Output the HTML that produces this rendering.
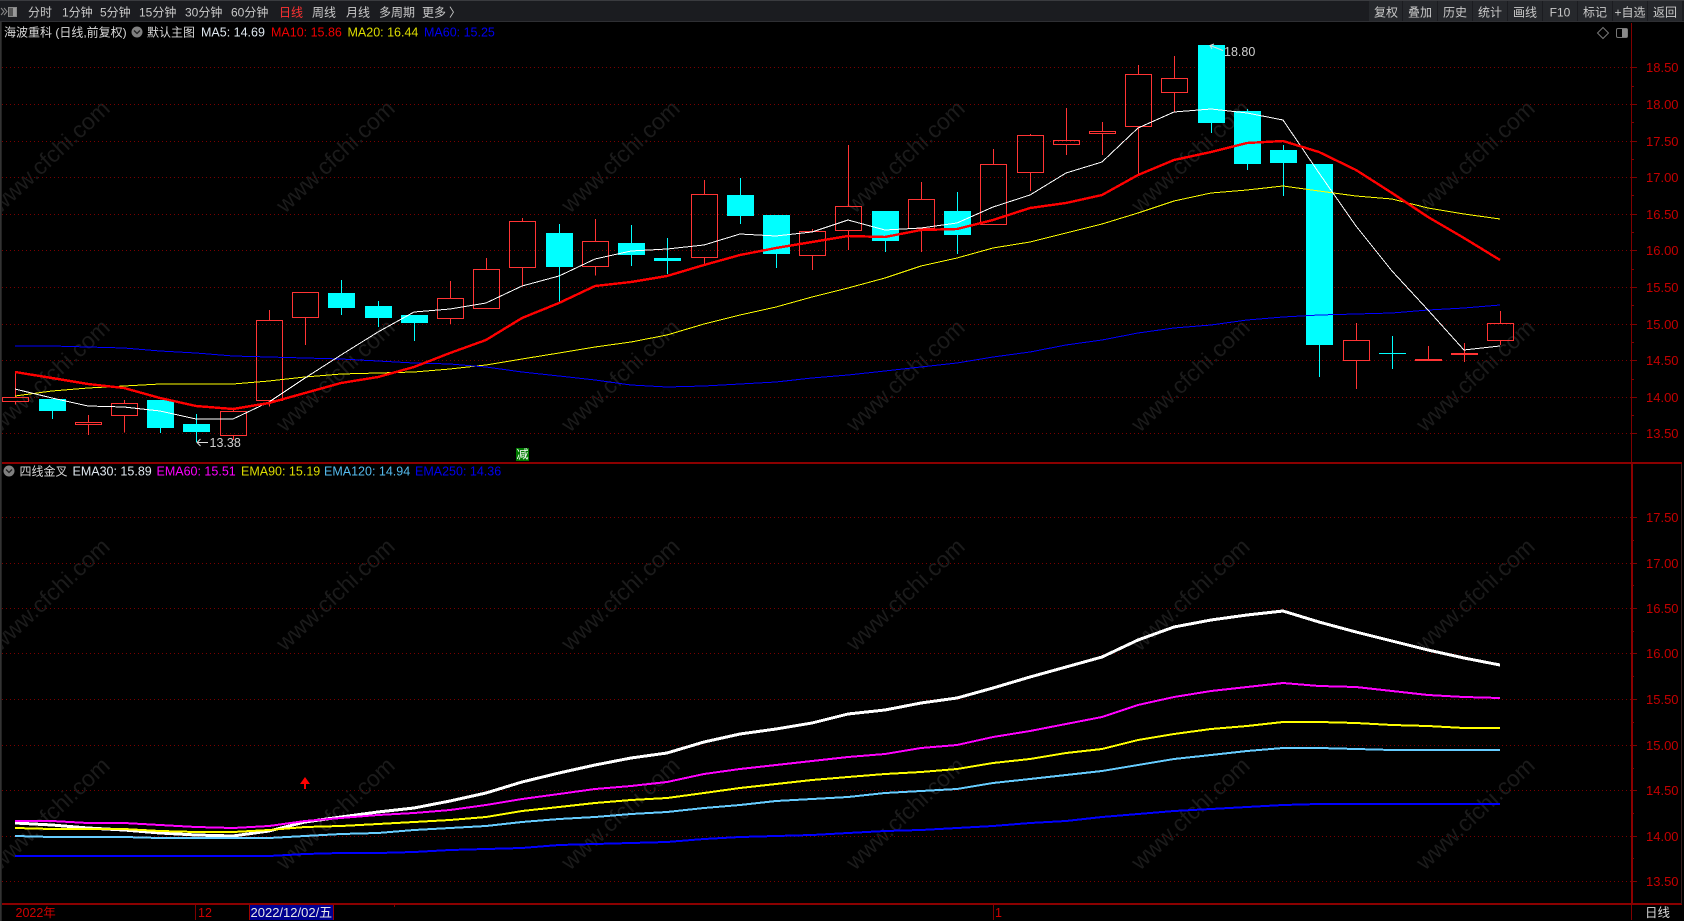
<!DOCTYPE html>
<html lang="zh"><head><meta charset="utf-8"><title>海波重科</title>
<style>
html,body{margin:0;padding:0;background:#000;width:1684px;height:921px;overflow:hidden}
svg{display:block;position:absolute;left:0;top:0}
text{font-family:"Liberation Sans","Noto Sans CJK SC",sans-serif;font-size:12.5px}
.tb text{fill:#c9c9c9;font-size:12px}
.btn text{fill:#c9c9c9;font-size:12px;text-anchor:middle}
.wm text{fill:#1b1b1b;font-size:23px}
.ax text{fill:#c40000;font-size:13px}
.grid path{stroke:#7a0000;stroke-width:1;stroke-dasharray:1 3;fill:none}
.ln{fill:none;shape-rendering:crispEdges;stroke-linejoin:round}
</style></head><body>
<svg width="1684" height="921" viewBox="0 0 1684 921" xmlns="http://www.w3.org/2000/svg">
<rect width="1684" height="921" fill="#000"/>

<!-- watermark -->
<g class="wm">
<text transform="translate(0,214) rotate(-43)">www.cfchi.com</text><text transform="translate(285,214) rotate(-43)">www.cfchi.com</text><text transform="translate(570,214) rotate(-43)">www.cfchi.com</text><text transform="translate(855,214) rotate(-43)">www.cfchi.com</text><text transform="translate(1140,214) rotate(-43)">www.cfchi.com</text><text transform="translate(1425,214) rotate(-43)">www.cfchi.com</text>
<text transform="translate(0,433) rotate(-43)">www.cfchi.com</text><text transform="translate(285,433) rotate(-43)">www.cfchi.com</text><text transform="translate(570,433) rotate(-43)">www.cfchi.com</text><text transform="translate(855,433) rotate(-43)">www.cfchi.com</text><text transform="translate(1140,433) rotate(-43)">www.cfchi.com</text><text transform="translate(1425,433) rotate(-43)">www.cfchi.com</text>
<text transform="translate(0,652) rotate(-43)">www.cfchi.com</text><text transform="translate(285,652) rotate(-43)">www.cfchi.com</text><text transform="translate(570,652) rotate(-43)">www.cfchi.com</text><text transform="translate(855,652) rotate(-43)">www.cfchi.com</text><text transform="translate(1140,652) rotate(-43)">www.cfchi.com</text><text transform="translate(1425,652) rotate(-43)">www.cfchi.com</text>
<text transform="translate(0,871) rotate(-43)">www.cfchi.com</text><text transform="translate(285,871) rotate(-43)">www.cfchi.com</text><text transform="translate(570,871) rotate(-43)">www.cfchi.com</text><text transform="translate(855,871) rotate(-43)">www.cfchi.com</text><text transform="translate(1140,871) rotate(-43)">www.cfchi.com</text><text transform="translate(1425,871) rotate(-43)">www.cfchi.com</text>
</g>

<!-- grid -->
<g class="grid" shape-rendering="crispEdges">
<path d="M2 67.5H1631M2 104.5H1631M2 141.5H1631M2 177.5H1631M2 214.5H1631M2 250.5H1631M2 287.5H1631M2 324.5H1631M2 360.5H1631M2 397.5H1631M2 433.5H1631"/>
<path d="M2 517.5H1631M2 563.5H1631M2 608.5H1631M2 653.5H1631M2 699.5H1631M2 745.5H1631M2 790.5H1631M2 836.5H1631M2 881.5H1631"/>
</g>

<!-- frame -->
<g shape-rendering="crispEdges">
<rect x="0" y="22" width="1" height="899" fill="#333"/>
<rect x="1" y="22" width="1" height="899" fill="#222"/>
<rect x="1631" y="23" width="1" height="440" fill="#800000"/>
<rect x="1631" y="462" width="2" height="442" fill="#8b0000"/>
<rect x="2" y="462" width="1680" height="2" fill="#8b0000"/>
<rect x="2" y="903" width="1680" height="2" fill="#8b0000"/>
<rect x="1681" y="464" width="1" height="440" fill="#3a2020"/>
<rect x="1631" y="905" width="1" height="15" fill="#800000"/>
<path fill="none" stroke="#800000" d="M1632 67.5h5M1632 104.5h5M1632 141.5h5M1632 177.5h5M1632 214.5h5M1632 250.5h5M1632 287.5h5M1632 324.5h5M1632 360.5h5M1632 397.5h5M1632 433.5h5M1632 517.5h5M1632 563.5h5M1632 608.5h5M1632 653.5h5M1632 699.5h5M1632 745.5h5M1632 790.5h5M1632 836.5h5M1632 881.5h5M1632 86.5h2M1632 122.5h2M1632 159.5h2M1632 195.5h2M1632 232.5h2M1632 269.5h2M1632 305.5h2M1632 342.5h2M1632 379.5h2M1632 415.5h2M1632 540.5h2M1632 585.5h2M1632 631.5h2M1632 676.5h2M1632 722.5h2M1632 768.5h2M1632 813.5h2M1632 858.5h2"/>
</g>

<!-- axis labels -->
<g class="ax">
<text x="1646" y="72">18.50</text><text x="1646" y="109">18.00</text><text x="1646" y="146">17.50</text><text x="1646" y="182">17.00</text><text x="1646" y="219">16.50</text><text x="1646" y="255">16.00</text><text x="1646" y="292">15.50</text><text x="1646" y="329">15.00</text><text x="1646" y="365">14.50</text><text x="1646" y="402">14.00</text><text x="1646" y="438">13.50</text>
<text x="1646" y="522">17.50</text><text x="1646" y="568">17.00</text><text x="1646" y="613">16.50</text><text x="1646" y="658">16.00</text><text x="1646" y="704">15.50</text><text x="1646" y="750">15.00</text><text x="1646" y="795">14.50</text><text x="1646" y="841">14.00</text><text x="1646" y="886">13.50</text>
</g>

<!-- red candles -->
<path shape-rendering="crispEdges" fill="none" stroke="#ff3434" stroke-width="1" d="
M15.5 372V397.5M2.5 397.5H28.5V401.5H2.5ZM15.5 401.5V404.5
M88.5 415V422.5M75.5 422.5H101.5V424.5H75.5ZM88.5 424.5V435
M124.5 400V403.5M111.5 403.5H137.5V415.5H111.5ZM124.5 415.5V432.5
M233.5 408V411.5M220.5 411.5H246.5V435.5H220.5ZM233.5 435.5V440
M269.5 310V320.5M256.5 320.5H282.5V400.5H256.5ZM269.5 400.5V406.5
M292.5 292.5H318.5V317.5H292.5ZM305.5 317.5V345
M450.5 281V298.5M437.5 298.5H463.5V318.5H437.5ZM450.5 318.5V324
M486.5 258V269.5M473.5 269.5H499.5V308.5H473.5Z
M522.5 218V221.5M509.5 221.5H535.5V267.5H509.5ZM522.5 267.5V285.5
M595.5 219V241.5M582.5 241.5H608.5V266.5H582.5ZM595.5 266.5V275.5
M704.5 180V194.5M691.5 194.5H717.5V257.5H691.5ZM704.5 257.5V265
M812.5 229V231.5M799.5 231.5H825.5V255.5H799.5ZM812.5 255.5V270
M848.5 145V206.5M835.5 206.5H861.5V230.5H835.5ZM848.5 230.5V250
M921.5 182V199.5M908.5 199.5H934.5V228.5H908.5ZM921.5 228.5V252
M993.5 149V164.5M980.5 164.5H1006.5V224.5H980.5Z
M1030.5 134V135.5M1017.5 135.5H1043.5V172.5H1017.5ZM1030.5 172.5V191
M1066.5 108V140.5M1053.5 140.5H1079.5V144.5H1053.5ZM1066.5 144.5V155
M1102.5 122V131.5M1089.5 131.5H1115.5V133.5H1089.5ZM1102.5 133.5V155
M1138.5 65V74.5M1125.5 74.5H1151.5V126.5H1125.5ZM1138.5 126.5V175.5
M1174.5 56V78.5M1161.5 78.5H1187.5V92.5H1161.5ZM1174.5 92.5V111.5
M1356.5 323V340.5M1343.5 340.5H1369.5V360.5H1343.5ZM1356.5 360.5V389
M1428.5 346V359M1464.5 343V362
M1500.5 311V323.5M1487.5 323.5H1513.5V340.5H1487.5ZM1500.5 340.5V345"/>
<g shape-rendering="crispEdges" fill="#ff3434">
<rect x="1415" y="359" width="27" height="2"/>
<rect x="1451" y="353" width="27" height="2"/>
</g>

<!-- cyan candles -->
<g shape-rendering="crispEdges" fill="#0ff">
<path stroke="#0ff" fill="none" d="M52.5 411V419M160.5 428V433M196.5 414V442M341.5 280V315M378.5 301V327M414.5 323V341M559.5 224V302M631.5 225V266M667.5 238V274M740.5 178V224M776.5 254V268M885.5 241V252M957.5 192V254M1211.5 123V133M1247.5 109V170M1283.5 145V196M1319.5 345V377M1392.5 336V369"/>
<rect x="39" y="399" width="27" height="12"/>
<rect x="147" y="400" width="27" height="28"/>
<rect x="183" y="424" width="27" height="8"/>
<rect x="328" y="293" width="27" height="15"/>
<rect x="365" y="306" width="27" height="12"/>
<rect x="401" y="315" width="27" height="8"/>
<rect x="546" y="233" width="27" height="34"/>
<rect x="618" y="243" width="27" height="12"/>
<rect x="654" y="258" width="27" height="3"/>
<rect x="727" y="195" width="27" height="21"/>
<rect x="763" y="215" width="27" height="39"/>
<rect x="872" y="211" width="27" height="30"/>
<rect x="944" y="211" width="27" height="24"/>
<rect x="1198" y="45" width="27" height="78"/>
<rect x="1234" y="111" width="27" height="53"/>
<rect x="1270" y="150" width="27" height="13"/>
<rect x="1306" y="164" width="27" height="181"/>
<rect x="1379" y="353" width="27" height="1"/>
</g>

<!-- upper MA lines -->
<polyline class="ln" stroke="#ffff00" stroke-width="1" points="15,396 52,391 88,388 124,386 160,384 196,384 233,384 269,381 305,377 341,374 378,373 414,372 450,369 486,365 522,359 559,353 595,347 631,342 667,335 704,324 740,315 776,307 812,297 848,288 885,278 921,266 957,258 993,248 1030,242 1066,233 1102,224 1138,213 1174,201 1211,193 1247,190 1283,186 1319,191 1356,196 1392,199 1428,208 1464,214 1500,219"/>
<polyline class="ln" stroke="#0000ff" stroke-width="1" points="15,346 52,346 88,347 124,348 160,351 196,353 233,356 269,357 305,358 341,359 378,361 414,363 450,364 486,367 522,372 559,376 595,380 631,385 667,387 704,386 740,384 776,382 812,378 848,375 885,371 921,367 957,363 993,357 1030,352 1066,345 1102,340 1138,333 1174,328 1211,325 1247,320 1283,317 1319,315 1356,314 1392,313 1428,310 1464,308 1500,305"/>
<polyline class="ln" stroke="#ffffff" stroke-width="1" points="15,389 52,398 88,406 124,407 160,411 196,419 233,419 269,402 305,378 341,355 378,332 414,312 450,309 486,303 522,286 559,276 595,259 631,251 667,249 704,245 740,234 776,236 812,232 848,220 885,230 921,228 957,223 993,207 1030,195 1066,173 1102,162 1138,128 1174,112 1211,109 1247,113 1283,120 1319,173 1356,226 1392,271 1428,310 1464,350 1500,346"/>
<polyline class="ln" stroke="#ff0000" stroke-width="2.4" points="15,372 52,378 88,384 124,388 160,398 196,406 233,409 269,403 305,393 341,383 378,377 414,367 450,353 486,340 522,318 559,303 595,286 631,282 667,276 704,265 740,255 776,248 812,242 848,236 885,237 921,230 957,229 993,220 1030,208 1066,203 1102,195 1138,175 1174,160 1211,152 1247,143 1283,141 1319,152 1356,170 1392,193 1428,217 1464,238 1500,260"/>

<!-- lower EMA lines -->
<polyline class="ln" stroke="#ffffff" stroke-width="3" points="15,823 52,825 88,828 124,830 160,833 196,835 233,836 269,831 305,822 341,817 378,812 414,808 450,801 486,793 522,782 559,773 595,765 631,758 667,753 704,742 740,734 776,729 812,723 848,714 885,710 921,703 957,698 993,688 1030,677 1066,667 1102,657 1138,640 1174,627 1211,620 1247,615 1283,611 1319,622 1356,632 1392,641 1428,650 1464,658 1500,665"/>
<polyline class="ln" stroke="#ff00ff" stroke-width="2" points="15,821 52,821 88,823 124,823 160,825 196,827 233,828 269,826 305,821 341,818 378,815 414,813 450,810 486,805 522,799 559,794 595,789 631,786 667,782 704,774 740,769 776,765 812,761 848,757 885,754 921,748 957,745 993,737 1030,731 1066,724 1102,717 1138,705 1174,697 1211,691 1247,687 1283,683 1319,686 1356,687 1392,691 1428,695 1464,697 1500,698"/>
<polyline class="ln" stroke="#ffff00" stroke-width="2" points="15,828 52,829 88,829 124,829 160,831 196,832 233,832 269,830 305,827 341,826 378,824 414,822 450,820 486,817 522,811 559,807 595,803 631,800 667,798 704,793 740,788 776,784 812,780 848,777 885,774 921,772 957,769 993,763 1030,759 1066,753 1102,749 1138,740 1174,734 1211,729 1247,726 1283,722 1319,722 1356,723 1392,725 1428,726 1464,728 1500,728"/>
<polyline class="ln" stroke="#66ccff" stroke-width="2" points="15,836 52,837 88,837 124,837 160,838 196,838 233,838 269,838 305,836 341,834 378,833 414,830 450,828 486,826 522,822 559,819 595,817 631,814 667,812 704,808 740,805 776,801 812,799 848,797 885,793 921,791 957,789 993,783 1030,779 1066,775 1102,771 1138,765 1174,759 1211,755 1247,751 1283,748 1319,748 1356,749 1392,750 1428,750 1464,750 1500,750"/>
<polyline class="ln" stroke="#0000ff" stroke-width="2" points="15,856 52,856 88,856 124,856 160,856 196,856 233,856 269,856 305,854 341,853 378,853 414,852 450,850 486,849 522,848 559,845 595,844 631,843 667,842 704,839 740,837 776,836 812,835 848,833 885,831 921,830 957,828 993,826 1030,823 1066,821 1102,817 1138,814 1174,811 1211,809 1247,807 1283,805 1319,804 1356,804 1392,804 1428,804 1464,804 1500,804"/>

<!-- red up arrow -->
<path fill="#ff0000" d="M305 777L310 784H306V789H304V784H300Z"/>

<!-- 减 -->
<rect x="516" y="448" width="13" height="13" fill="#007a00"/>
<text x="516.5" y="458.5" fill="#fff" style="font-size:12px">减</text>

<!-- extreme labels -->
<path fill="none" stroke="#ddd" d="M197 442.5H208M200.5 439L197 442.5L200.5 446"/>
<text x="209.5" y="447" fill="#cfcfcf">13.38</text>
<path fill="none" stroke="#ddd" d="M1210 45.5L1223 50.5M1214 44L1210 45.5L1212 49"/>
<text x="1224" y="56" fill="#cfcfcf">18.80</text>

<!-- toolbar -->
<g shape-rendering="crispEdges">
<rect x="0" y="0" width="1684" height="22" fill="#1b1c20"/>
<rect x="0" y="0" width="1684" height="1" fill="#3a3b3f"/>
<rect x="0" y="21" width="1684" height="1" fill="#2e2f33"/>
<rect x="1369" y="1" width="33" height="20" fill="#26282c"/>
<rect x="1403" y="1" width="34" height="20" fill="#26282c"/>
<rect x="1438" y="1" width="34" height="20" fill="#26282c"/>
<rect x="1473" y="1" width="34" height="20" fill="#26282c"/>
<rect x="1508" y="1" width="34" height="20" fill="#26282c"/>
<rect x="1543" y="1" width="34" height="20" fill="#26282c"/>
<rect x="1578" y="1" width="34" height="20" fill="#26282c"/>
<rect x="1613" y="1" width="34" height="20" fill="#26282c"/>
<rect x="1648" y="1" width="34" height="20" fill="#26282c"/>
</g>
<path fill="none" stroke="#888" stroke-width="1" d="M1 8L4 11.5L1 15M4 8L7 11.5L4 15"/>
<rect x="8.5" y="7.5" width="8" height="9" fill="#555" stroke="#888"/>
<rect x="13" y="8" width="3" height="8" fill="#999"/>
<g class="tb">
<text x="28" y="16.5">分时</text><text x="62" y="16.5">1分钟</text><text x="100" y="16.5">5分钟</text><text x="139" y="16.5">15分钟</text><text x="185" y="16.5">30分钟</text><text x="231" y="16.5">60分钟</text>
<text x="279" y="16.5" style="fill:#ff3232">日线</text><text x="312" y="16.5">周线</text><text x="346" y="16.5">月线</text><text x="379" y="16.5">多周期</text><text x="422" y="16.5">更多</text><text x="449" y="16.5">〉</text>
</g>
<g class="btn">
<text x="1386" y="16.5">复权</text><text x="1420" y="16.5">叠加</text><text x="1455" y="16.5">历史</text><text x="1490" y="16.5">统计</text><text x="1525" y="16.5">画线</text><text x="1560" y="16.5">F10</text><text x="1595" y="16.5">标记</text><text x="1630" y="16.5">+自选</text><text x="1665" y="16.5">返回</text>
</g>

<!-- pane 1 title -->
<text x="4" y="36.5" fill="#d8d8d8" style="font-size:12px">海波重科 (日线,前复权)</text>
<circle cx="137" cy="32" r="5.5" fill="#808080"/>
<path d="M134 30.5L137 33.5L140 30.5" fill="none" stroke="#222" stroke-width="1.3"/>
<text x="147" y="36.5" fill="#d8d8d8" style="font-size:12px">默认主图</text>
<text x="201" y="36.5" fill="#dfe8f0">MA5: 14.69</text>
<text x="271" y="36.5" fill="#ee0000">MA10: 15.86</text>
<text x="347.5" y="36.5" fill="#dddd00">MA20: 16.44</text>
<text x="424" y="36.5" fill="#0000f0">MA60: 15.25</text>

<!-- top-right icons -->
<path d="M1603 27.5L1608.5 33L1603 38.5L1597.5 33Z" fill="none" stroke="#777"/>
<rect x="1616.5" y="28.5" width="11" height="9" rx="1.5" fill="none" stroke="#777"/>
<rect x="1622" y="29" width="5" height="8" fill="#8a8a8a"/>

<!-- pane 2 title -->
<circle cx="9" cy="471" r="5.5" fill="#808080"/>
<path d="M6 469.5L9 472.5L12 469.5" fill="none" stroke="#222" stroke-width="1.3"/>
<text x="19.5" y="475.5" fill="#d8d8d8" style="font-size:12px">四线金叉</text>
<text x="72.5" y="475.5" fill="#dfe8f0">EMA30: 15.89</text>
<text x="156.5" y="475.5" fill="#ff00ff">EMA60: 15.51</text>
<text x="241" y="475.5" fill="#dddd00">EMA90: 15.19</text>
<text x="324" y="475.5" fill="#55bbee">EMA120: 14.94</text>
<text x="415" y="475.5" fill="#0000f0">EMA250: 14.36</text>

<!-- bottom axis -->
<text x="15.5" y="917" fill="#d00000">2022年</text>
<rect x="195" y="905" width="1" height="15" fill="#800000" shape-rendering="crispEdges"/>
<text x="198" y="917" fill="#d00000">12</text>
<rect x="249" y="905" width="84" height="15" fill="#000090" shape-rendering="crispEdges"/>
<rect x="249" y="905" width="1" height="15" fill="#a00000" shape-rendering="crispEdges"/>
<rect x="333" y="905" width="1" height="15" fill="#a00000" shape-rendering="crispEdges"/>
<text x="250.5" y="917" fill="#e8e8e8" style="font-size:13px">2022/12/02/五</text>
<rect x="394" y="905" width="1" height="2" fill="#800000" shape-rendering="crispEdges"/>
<rect x="993" y="905" width="1" height="15" fill="#800000" shape-rendering="crispEdges"/>
<text x="995" y="917" fill="#d00000">1</text>
<text x="1645" y="917" fill="#d8d8d8">日线</text>
</svg>
</body></html>
